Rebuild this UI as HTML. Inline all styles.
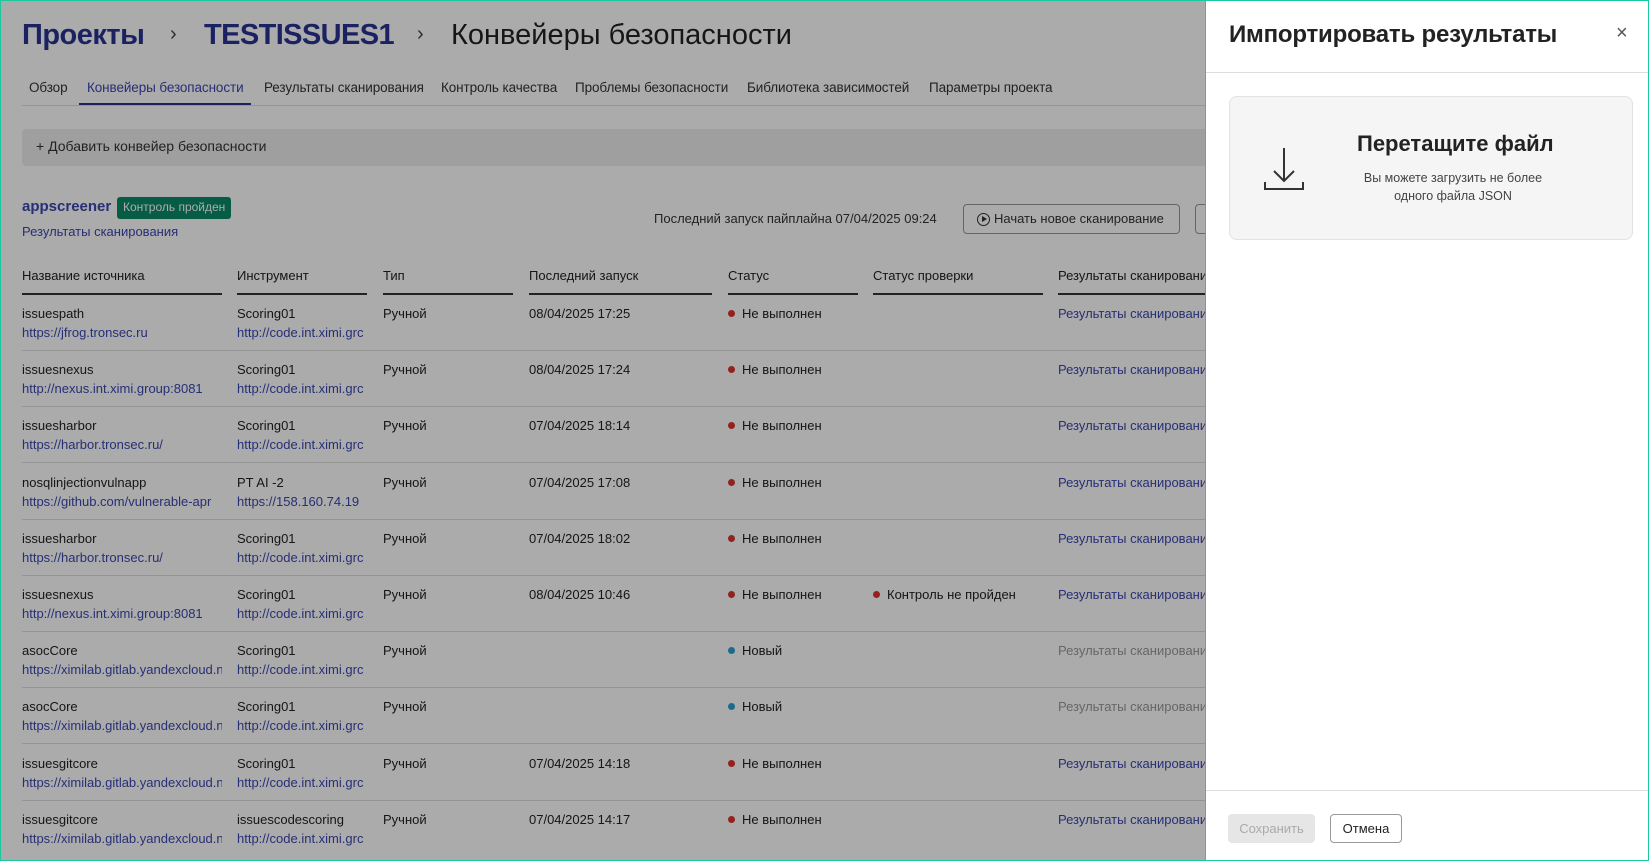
<!DOCTYPE html>
<html><head><meta charset="utf-8"><style>
*{box-sizing:border-box;margin:0;padding:0}
body{width:1649px;height:861px;overflow:hidden;background:#fff;font-family:"Liberation Sans",sans-serif;color:#222;position:relative;font-size:13px}
.a{position:absolute;white-space:nowrap}
.lk{color:#3b47b0}
.ov{position:absolute;left:0;top:0;width:1206px;height:861px;background:rgba(0,0,0,0.33)}
.dot{display:inline-block;width:7px;height:7px;border-radius:50%;margin-right:7px;vertical-align:1px}
.hl{position:absolute;height:2px;background:#333;top:293px}
.rl{position:absolute;left:22px;width:1184px;height:1px;background:#ddd}
.tab{font-size:13.5px;top:80px;color:#333;letter-spacing:-0.1px}
</style></head><body>
<div class="a" style="left:22px;top:19px;font-size:29px;font-weight:bold;letter-spacing:-0.5px;color:#2a3491">Проекты</div>
<div class="a" style="left:170px;top:23px;font-size:20px;color:#444">›</div>
<div class="a" style="left:204px;top:19px;font-size:29px;font-weight:bold;letter-spacing:-0.6px;color:#2a3491">TESTISSUES1</div>
<div class="a" style="left:417px;top:23px;font-size:20px;color:#444">›</div>
<div class="a" style="left:451px;top:19px;font-size:29px;color:#222">Конвейеры безопасности</div>
<div class="a tab" style="left:29px">Обзор</div>
<div class="a tab lk" style="left:87px;color:#3b47b0">Конвейеры безопасности</div>
<div class="a" style="left:79px;top:103px;width:172px;height:3px;background:#2a3491"></div>
<div class="a" style="left:22px;top:105px;width:1184px;height:1px;background:#ddd"></div>
<div class="a tab" style="left:264px">Результаты сканирования</div>
<div class="a tab" style="left:441px">Контроль качества</div>
<div class="a tab" style="left:575px">Проблемы безопасности</div>
<div class="a tab" style="left:747px">Библиотека зависимостей</div>
<div class="a tab" style="left:929px">Параметры проекта</div>
<div class="a" style="left:22px;top:129px;width:1190px;height:37px;background:#eee;border-radius:4px"></div>
<div class="a" style="left:36px;top:138px;font-size:14px;color:#333">+ Добавить конвейер безопасности</div>
<div class="a lk" style="left:22px;top:198px;font-size:15px;font-weight:bold">appscreener</div>
<div class="a" style="left:117px;top:197px;height:22px;padding:3px 6px;background:#0a8a68;color:#fff;font-size:12px;border-radius:3px">Контроль пройден</div>
<div class="a lk" style="left:22px;top:224px;font-size:13px">Результаты сканирования</div>
<div class="a" style="left:654px;top:211px;font-size:13px;color:#333">Последний запуск пайплайна 07/04/2025 09:24</div>
<div class="a" style="left:963px;top:204px;width:217px;height:30px;border:1px solid #999;border-radius:4px;font-size:13px;padding:6px 0 0 30px;color:#333">Начать новое сканирование</div>
<div class="a" style="left:977px;top:213px;width:13px;height:13px;border:1.5px solid #333;border-radius:50%"></div>
<div class="a" style="left:982px;top:216px;width:0;height:0;border-left:5px solid #333;border-top:3.5px solid transparent;border-bottom:3.5px solid transparent"></div>
<div class="a" style="left:1195px;top:204px;width:20px;height:30px;border:1px solid #999;border-radius:4px"></div>
<div class="a" style="left:22px;top:268px">Название источника</div><div class="hl" style="left:22px;width:200px"></div>
<div class="a" style="left:237px;top:268px">Инструмент</div><div class="hl" style="left:237px;width:130px"></div>
<div class="a" style="left:383px;top:268px">Тип</div><div class="hl" style="left:383px;width:130px"></div>
<div class="a" style="left:529px;top:268px">Последний запуск</div><div class="hl" style="left:529px;width:183px"></div>
<div class="a" style="left:728px;top:268px">Статус</div><div class="hl" style="left:728px;width:130px"></div>
<div class="a" style="left:873px;top:268px">Статус проверки</div><div class="hl" style="left:873px;width:170px"></div>
<div class="a" style="left:1058px;top:268px">Результаты сканирования</div><div class="hl" style="left:1058px;width:150px"></div>
<div id="rows"></div>
<script>
var d=[["issuespath","https://jfrog.tronsec.ru","Scoring01","http://code.int.ximi.grc","08/04/2025 17:25",0,0],
["issuesnexus","http://nexus.int.ximi.group:8081","Scoring01","http://code.int.ximi.grc","08/04/2025 17:24",0,0],
["issuesharbor","https://harbor.tronsec.ru/","Scoring01","http://code.int.ximi.grc","07/04/2025 18:14",0,0],
["nosqlinjectionvulnapp","https://github.com/vulnerable-apr","PT AI -2","https://158.160.74.19","07/04/2025 17:08",0,0],
["issuesharbor","https://harbor.tronsec.ru/","Scoring01","http://code.int.ximi.grc","07/04/2025 18:02",0,0],
["issuesnexus","http://nexus.int.ximi.group:8081","Scoring01","http://code.int.ximi.grc","08/04/2025 10:46",0,1],
["asocCore","https://ximilab.gitlab.yandexcloud.n","Scoring01","http://code.int.ximi.grc","",1,0],
["asocCore","https://ximilab.gitlab.yandexcloud.n","Scoring01","http://code.int.ximi.grc","",1,0],
["issuesgitcore","https://ximilab.gitlab.yandexcloud.n","Scoring01","http://code.int.ximi.grc","07/04/2025 14:18",0,0],
["issuesgitcore","https://ximilab.gitlab.yandexcloud.n","issuescodescoring","http://code.int.ximi.grc","07/04/2025 14:17",0,0]];
var h="";d.forEach(function(r,i){var y=306+i*56.2;
h+='<div class="a" style="left:22px;top:'+y+'px">'+r[0]+'</div><div class="a lk" style="left:22px;top:'+(y+19)+'px;width:200px;overflow:hidden">'+r[1]+'</div>';
h+='<div class="a" style="left:237px;top:'+y+'px">'+r[2]+'</div><div class="a lk" style="left:237px;top:'+(y+19)+'px;width:130px;overflow:hidden">'+r[3]+'</div>';
h+='<div class="a" style="left:383px;top:'+y+'px">Ручной</div><div class="a" style="left:529px;top:'+y+'px">'+r[4]+'</div>';
h+='<div class="a" style="left:728px;top:'+y+'px"><span class="dot" style="background:'+(r[5]?'#2a9fd6':'#d9332e')+'"></span>'+(r[5]?'Новый':'Не выполнен')+'</div>';
if(r[6])h+='<div class="a" style="left:873px;top:'+y+'px"><span class="dot" style="background:#d9332e"></span>Контроль не пройден</div>';
h+='<div class="a '+(r[5]?'':'lk')+'" style="left:1058px;top:'+y+'px;width:148px;overflow:hidden;'+(r[5]?'color:#999':'')+'">Результаты сканирования</div>';
if(i<9)h+='<div class="rl" style="top:'+(y+44)+'px"></div>';});
document.getElementById("rows").innerHTML=h;
</script>
<div class="ov"></div>
<div class="a" style="left:1206px;top:0;width:443px;height:861px;background:#fff"></div>
<div class="a" style="left:1229px;top:21px;font-size:24px;font-weight:bold;letter-spacing:-0.2px;color:#222">Импортировать результаты</div>
<div class="a" style="left:1616px;top:22px;font-size:20px;color:#555">×</div>
<div class="a" style="left:1206px;top:72px;width:443px;height:1px;background:#ddd"></div>
<div class="a" style="left:1229px;top:96px;width:404px;height:144px;background:#f5f5f5;border:1px solid #e2e2e2;border-radius:8px"></div>
<svg class="a" style="left:1262px;top:145px" width="44" height="46" viewBox="0 0 44 46"><path d="M22 3V36M12 26L22 36L32 26M3 37V44H41V37" fill="none" stroke="#333" stroke-width="2"/></svg>
<div class="a" style="left:1357px;top:131px;font-size:22px;font-weight:bold;color:#222">Перетащите файл</div>
<div class="a" style="left:1353px;top:169px;width:200px;text-align:center;font-size:12.5px;line-height:18px;color:#444;white-space:normal">Вы можете загрузить не более одного файла JSON</div>
<div class="a" style="left:1206px;top:790px;width:443px;height:1px;background:#ddd"></div>
<div class="a" style="left:1228px;top:814px;width:87px;height:29px;background:#e6e6e6;border-radius:4px;color:#aaa;font-size:13px;text-align:center;padding-top:7px">Сохранить</div>
<div class="a" style="left:1330px;top:814px;width:72px;height:29px;border:1px solid #999;border-radius:4px;color:#222;font-size:13px;text-align:center;padding-top:6px">Отмена</div>
<div class="a" style="left:0;top:0;width:1649px;height:861px;border:1.5px solid #1fc7a0"></div>
<div class="a" style="left:1205px;top:0;width:1px;height:861px;background:#1fc7a0"></div>
</body></html>
